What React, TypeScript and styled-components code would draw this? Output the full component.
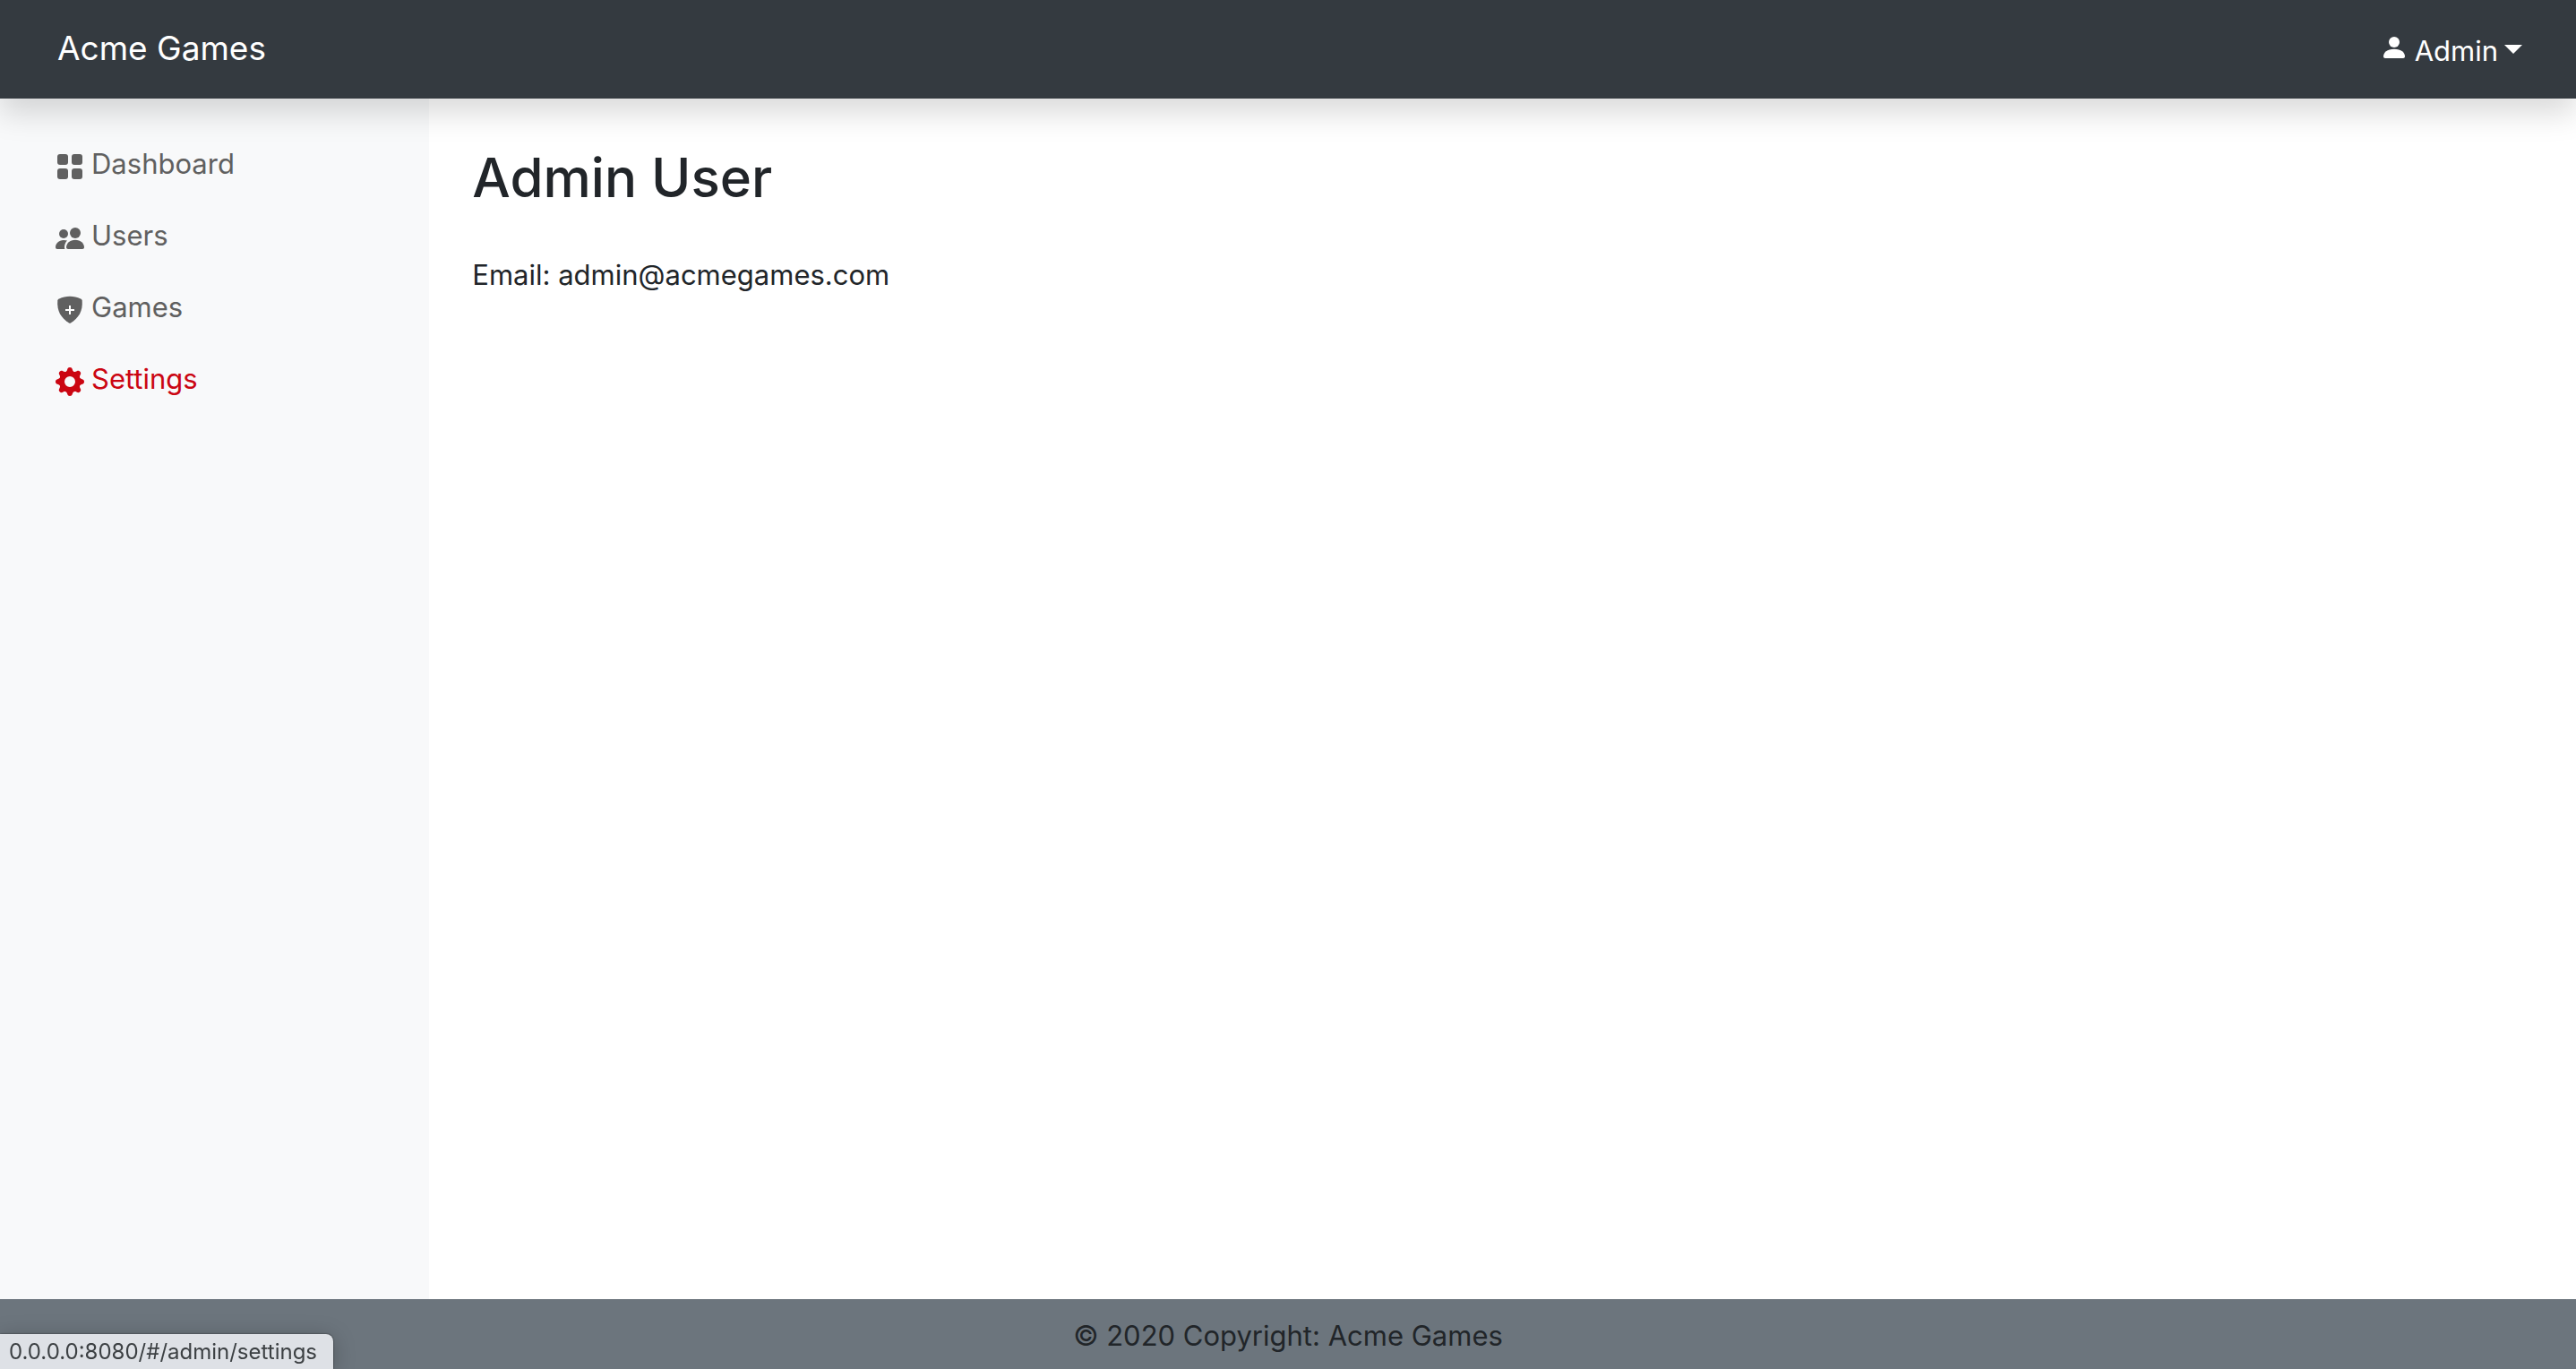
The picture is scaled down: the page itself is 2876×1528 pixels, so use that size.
import React from "react";
import styled, { createGlobalStyle } from "styled-components";

const GlobalStyle = createGlobalStyle`
  *, *::before, *::after { box-sizing: border-box; }
  body {
    margin: 0;
    background: #fff;
    color: #212529;
    font-family: Inter, "Liberation Sans", sans-serif;
    font-size: 31px;
    line-height: 48px;
  }
`;

const Page = styled.div`
  display: flex;
  flex-direction: column;
  min-height: 100vh;
`;

const Header = styled.header`
  position: relative;
  z-index: 1;
  display: flex;
  align-items: center;
  justify-content: space-between;
  min-height: 110px;
  padding: 0 60px 0 64px;
  background: #343a40;
  box-shadow: 0 16px 32px rgba(0, 0, 0, 0.15);
`;

const Brand = styled.a`
  padding-bottom: 2px;
  color: #fff;
  font-size: 37px;
  text-decoration: none;
`;

const UserMenu = styled.button`
  display: flex;
  align-items: center;
  gap: 7px;
  padding: 3px 0 0;
  border: 0;
  background: none;
  color: #fff;
  font: inherit;
  cursor: pointer;

  svg {
    margin-bottom: 8px;
  }
`;

const Caret = styled.span`
  margin-bottom: 4px;
  border-top: 10px solid;
  border-right: 10px solid transparent;
  border-left: 10px solid transparent;
`;

const Body = styled.div`
  display: flex;
  flex: 1;
`;

const Sidebar = styled.nav`
  flex: 0 0 calc(100% / 6);
  padding: 33px 0;
  background: #f8f9fa;
`;

const NavList = styled.ul`
  margin: 0;
  padding: 0;
  list-style: none;
`;

const NavLink = styled.a<{ $active?: boolean }>`
  display: flex;
  align-items: center;
  gap: 8px;
  padding: 16px 62px;
  color: ${({ $active }) => ($active ? "#cb0612" : "#606060")};
  text-decoration: none;

  svg {
    margin-top: 6px;
  }
`;

const Main = styled.main`
  flex: 1;
  padding: 50px 48px;
`;

const Title = styled.h1`
  margin: 0 0 47px;
  font-size: 60px;
  font-weight: 500;
  line-height: 76px;
`;

const Text = styled.p`
  margin: 0;
`;

const Footer = styled.footer`
  padding: 17px 0 13px;
  background: #6c757d;
  text-align: center;
`;

const StatusBubble = styled.div`
  position: fixed;
  bottom: 0;
  left: 0;
  z-index: 2;
  padding: 1px 18px 0 10px;
  border-top-right-radius: 8px;
  background: #dee1e6;
  box-shadow: 0 0 2px rgba(0, 0, 0, 0.7), 0 4px 24px rgba(0, 0, 0, 0.25);
  color: #3c4043;
  font-size: 24px;
  line-height: 38px;
`;

const Icon = styled.svg.attrs({ viewBox: "0 0 32 32", "aria-hidden": true })`
  flex: none;
  width: 32px;
  height: 32px;
  fill: currentColor;
`;

const GridIcon = () => (
  <Icon>
    <rect x="2" y="2" width="12" height="12" rx="3" />
    <rect x="18" y="2" width="12" height="12" rx="3" />
    <rect x="2" y="18" width="12" height="12" rx="3" />
    <rect x="18" y="18" width="12" height="12" rx="3" />
  </Icon>
);

const PeopleIcon = () => (
  <Icon>
    <circle cx="9" cy="11" r="5" />
    <circle cx="22" cy="10" r="6" />
    <path d="M0 26c0-4 3.6-8 9-8 1.5 0 2.8.2 4 .6-2 1.900-3 4.700-3 7.400 0 .7.1 1.400.4 2H2c-1.300 0-2-.7-2-2Z" />
    <path d="M12 26c0-4 4-8.200 10-8.200S32 22 32 26c0 1.300-.8 2-2 2H14c-1.200 0-2-.7-2-2Z" />
  </Icon>
);

const ShieldIcon = () => (
  <Icon>
    <path d="M16 .8c4.200 0 8.300 1.200 12 2.600 1 .4 1.600 1.100 1.700 2.200C30.600 17 26 25 17 30.400q-1 .5-2 0C6 25 1.400 17 2.300 5.600c.1-1.100.7-1.800 1.700-2.200C7.700 2 11.800.8 16 .8Z" />
    <path d="M16 11v10M11 16h10" stroke="#fff" strokeWidth="2" />
  </Icon>
);

const GearIcon = () => (
  <Icon>
    <circle cx="16" cy="16" r="9" fill="none" stroke="currentColor" strokeWidth="6" />
    {[0, 45, 90, 135, 180, 225, 270, 315].map((angle) => (
      <path
        key={angle}
        transform={`rotate(${angle} 16 16)`}
        d="M10.500 6.500C12 4.500 12.800 4 13.200 2.200 13.600.7 14.500 0 16 0s2.400.7 2.800 2.200C19.200 4 20 4.500 21.500 6.500Z"
      />
    ))}
  </Icon>
);

const PersonIcon = () => (
  <Icon>
    <circle cx="16" cy="10" r="6" />
    <path d="M4 26c0-4 4-8.200 12-8.200S28 22 28 26c0 1.300-.8 2-2 2H6c-1.200 0-2-.7-2-2Z" />
  </Icon>
);

const links = [
  { label: "Dashboard", href: "#/admin", icon: GridIcon },
  { label: "Users", href: "#/admin/users", icon: PeopleIcon },
  { label: "Games", href: "#/admin/games", icon: ShieldIcon },
  { label: "Settings", href: "#/admin/settings", icon: GearIcon, active: true },
];

export default function App() {
  return (
    <Page>
      <GlobalStyle />
      <Header>
        <Brand href="#/">Acme Games</Brand>
        <UserMenu type="button" aria-haspopup="true">
          <PersonIcon />
          Admin
          <Caret />
        </UserMenu>
      </Header>
      <Body>
        <Sidebar>
          <NavList>
            {links.map(({ label, href, icon: LinkIcon, active }) => (
              <li key={label}>
                <NavLink href={href} $active={active}>
                  <LinkIcon />
                  {label}
                </NavLink>
              </li>
            ))}
          </NavList>
        </Sidebar>
        <Main>
          <Title>Admin User</Title>
          <Text>Email: admin@acmegames.com</Text>
        </Main>
      </Body>
      <Footer>© 2020 Copyright: Acme Games</Footer>
      <StatusBubble>0.0.0.0:8080/#/admin/settings</StatusBubble>
    </Page>
  );
}
